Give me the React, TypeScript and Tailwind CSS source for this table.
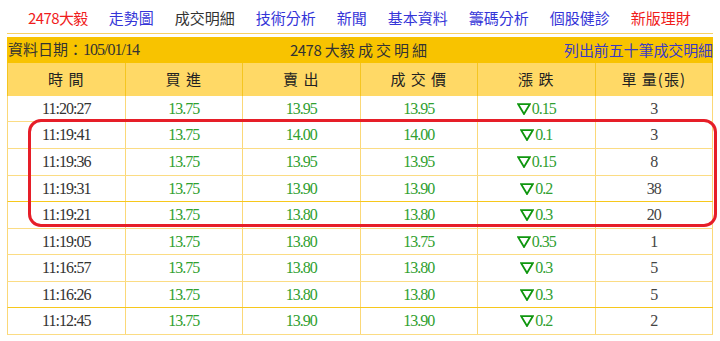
import React from "react";

const rows: [string, string, string, string, string, string][] = [
  ["11:20:27", "13.75", "13.95", "13.95", "0.15", "3"],
  ["11:19:41", "13.75", "14.00", "14.00", "0.1", "3"],
  ["11:19:36", "13.75", "13.95", "13.95", "0.15", "8"],
  ["11:19:31", "13.75", "13.90", "13.90", "0.2", "38"],
  ["11:19:21", "13.75", "13.80", "13.80", "0.3", "20"],
  ["11:19:05", "13.75", "13.80", "13.75", "0.35", "1"],
  ["11:16:57", "13.75", "13.80", "13.80", "0.3", "5"],
  ["11:16:26", "13.75", "13.80", "13.80", "0.3", "5"],
  ["11:12:45", "13.75", "13.90", "13.90", "0.2", "2"],
];

const heights = [26, 27, 27, 26, 27, 26, 27, 26, 27];

const cjk = "font-['Noto_Sans_CJK_TC','Noto_Sans_CJK_SC',sans-serif]";
const num = "font-['Liberation_Serif','Noto_Sans_CJK_TC',serif] text-[16px] tracking-[-1px]";

function Tri() {
  return (
    <svg width="14" height="12" viewBox="0 0 14 12" className="shrink-0 mr-[1px]">
      <polygon points="1.2,1.2 12.8,1.2 7,11" fill="none" stroke="#0f960f" strokeWidth="1.8" />
    </svg>
  );
}

export default function App() {
  const navs: [string, string][] = [
    ["2478大毅", "text-[#f01c1c]"],
    ["走勢圖", "text-[#3535d8]"],
    ["成交明細", "text-[#333333]"],
    ["技術分析", "text-[#3535d8]"],
    ["新聞", "text-[#3535d8]"],
    ["基本資料", "text-[#3535d8]"],
    ["籌碼分析", "text-[#3535d8]"],
    ["個股健診", "text-[#3535d8]"],
    ["新版理財", "text-[#f01c1c]"],
  ];
  return (
    <div className="relative w-[720px] h-[341px] bg-white overflow-hidden">
      <div className={`flex h-[33px] items-center pl-[28px] gap-[21px] pt-[2px] text-[15px] ${cjk}`}>
        {navs.map(([t, c], i) => (
          <span key={i} className={`${c} leading-none ${i === 0 ? "tracking-[-0.6px]" : ""}`}>
            {t}
          </span>
        ))}
      </div>
      <div className="ml-[7px] w-[706px] h-px bg-[#f7d164]" />
      <div className="ml-[7px] mt-[3px] w-[706px]">
        <div className={`grid grid-cols-[1fr_auto_1fr] items-center h-[26px] bg-[#f8c300] text-[15px] ${cjk}`}>
          <div className="pl-[1px] text-[#333] whitespace-nowrap">
            資料日期：<span className={num}>105/01/14</span>
          </div>
          <div className="text-[#333] whitespace-nowrap">
            <span className="tracking-[-0.5px]">2478</span> 大毅 <span className="tracking-[3px]">成交明細</span>
          </div>
          <div className="text-right text-[#3b3bc4] whitespace-nowrap tracking-[-0.1px]">列出前五十筆成交明細</div>
        </div>
        <div className={`grid grid-cols-6 h-[33px] bg-[#ffd966] border-l border-[#f5c520] text-[15px] text-[#222] ${cjk}`}>
          {["時 間", "買 進", "賣 出", "成 交 價", "漲 跌", "單 量(張)"].map((h, i) => (
            <div key={i} className="flex items-center justify-center border-r border-[#f5c520] whitespace-pre tracking-[1px]">
              {h}
            </div>
          ))}
        </div>
        {rows.map((r, i) => (
          <div
            key={i}
            style={{ height: heights[i] }}
            className={`grid grid-cols-6 border-l border-b ${i === 3 || i === 7 ? "border-b-[#f7c81c]" : "border-b-[#fbdc84]"} border-l-[#fbd878] ${num}`}
          >
            <div className="flex items-center justify-center border-r border-[#fbd878] text-[#333]">{r[0]}</div>
            <div className="flex items-center justify-center border-r border-[#fbd878] text-[#30a030]">{r[1]}</div>
            <div className="flex items-center justify-center border-r border-[#fbd878] text-[#30a030]">{r[2]}</div>
            <div className="flex items-center justify-center border-r border-[#fbd878] text-[#30a030]">{r[3]}</div>
            <div className="flex items-center justify-center border-r border-[#fbd878] text-[#30a030]">
              <Tri />
              {r[4]}
            </div>
            <div className="flex items-center justify-center border-r border-[#fbd878] text-[#444]">{r[5]}</div>
          </div>
        ))}
      </div>
      <div className="absolute left-[28px] top-[119px] w-[689px] h-[108px] border-[3.5px] border-[#e61e28] rounded-[13px]" />
    </div>
  );
}
